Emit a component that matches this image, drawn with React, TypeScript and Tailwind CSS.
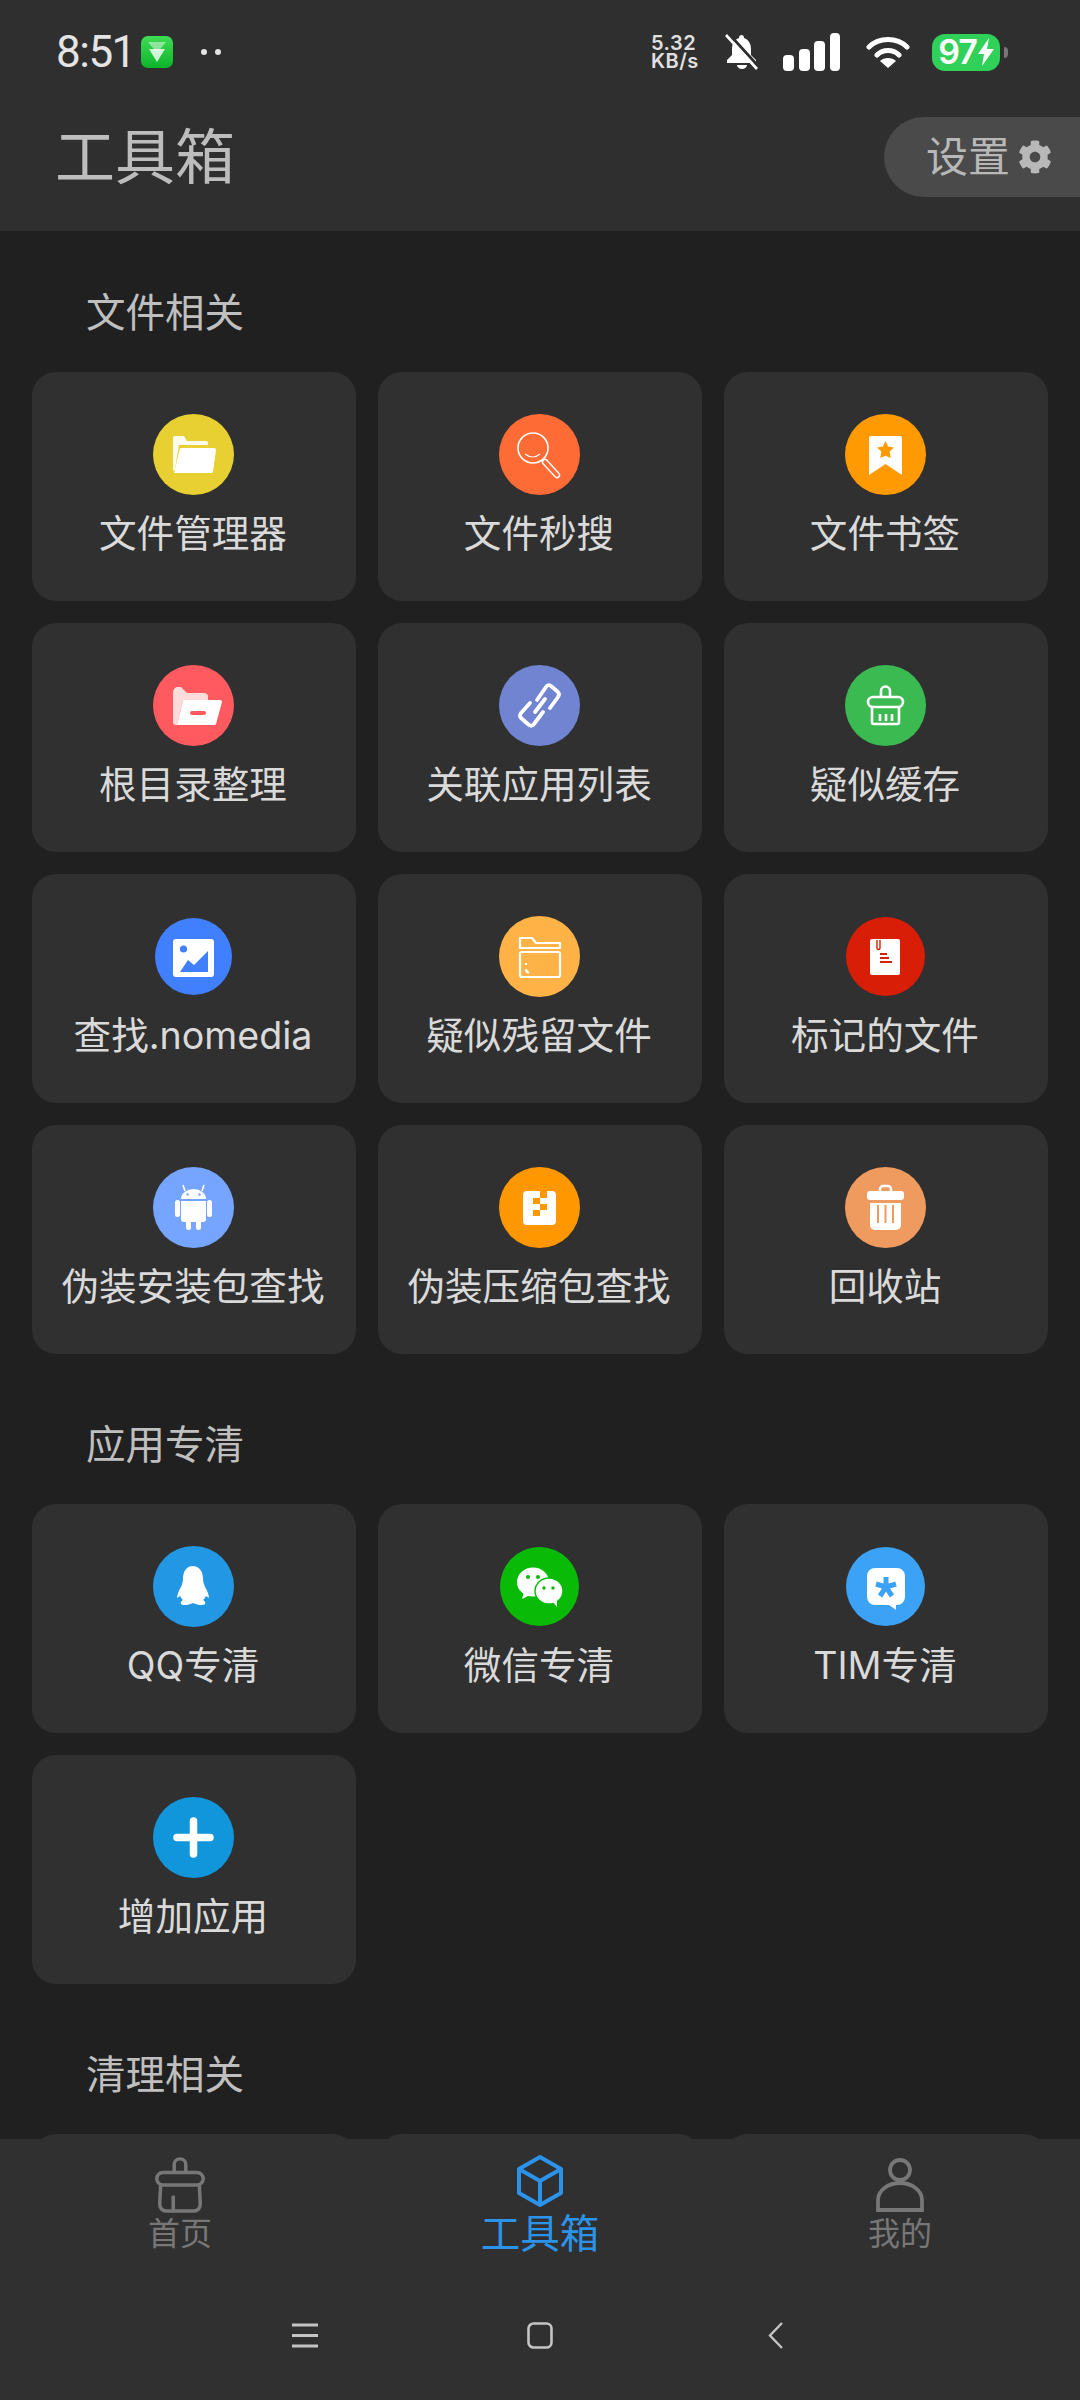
import type { ReactNode } from 'react'
import { FaCog } from 'react-icons/fa'

function Circle({ color, r = 40.5, children }: { color: string; r?: number; children: ReactNode }) {
  return <svg viewBox="0 0 81 81" className="h-[81px] w-[81px] shrink-0" aria-hidden="true">
    <circle cx="40.5" cy="40.5" r={r} fill={color} />
    {children}
  </svg>
}

const fileTools = [
  {
    label: '文件管理器',
    icon: <Circle color="#e8cf32">
      <path d="M20 24a2 2 0 0 1 2-2h9l3 5h19a2 2 0 0 1 2 2v2H26l-4 24-2 2z" fill="#fff" fillOpacity="0.9" />
      <path d="M27 34h34a2 2 0 0 1 2 2l-3 22a2 2 0 0 1-2 1H21z" fill="#fff" />
    </Circle>,
  },
  {
    label: '文件秒搜',
    icon: <Circle color="#ff6b35">
      <g fill="none" stroke="#fff">
        <circle cx="34" cy="34" r="15" strokeWidth="1.6" />
        <path d="M26 40q8 6 15 0" strokeWidth="1.2" />
      </g>
      <path d="M46 48l12 13" stroke="#fff" strokeWidth="6.5" strokeLinecap="round" />
      <path d="M46 48l12 13" stroke="#ff6b35" strokeWidth="3.6" strokeLinecap="round" />
    </Circle>,
  },
  {
    label: '文件书签',
    icon: <Circle color="#ff9a02">
      <path d="M24 24a2 2 0 0 1 2-2h29a2 2 0 0 1 2 2v37L40.5 50 24 61z" fill="#fff" />
      <path d="M40.5 27l2.6 5.6 5.9.8-4.3 4.2 1 6.4-5.2-2.2-5.2 2.2 1-6.4-4.3-4.2 5.9-.8z" fill="#ff9a02" />
    </Circle>,
  },
  {
    label: '根目录整理',
    icon: <Circle color="#ff5a5f">
      <path d="M20 27a5 5 0 0 1 5-5h3l6 6h17a4 4 0 0 1 4 4v4H30l-6 24h-1a3 3 0 0 1-3-3z" fill="#ffdcdc" />
      <path d="M30 36a2 2 0 0 1 2-1h35a2 2 0 0 1 2 2l-6 22a2 2 0 0 1-2 1H24z" fill="#fff" />
      <rect x="37" y="46" width="16" height="4" rx="2" fill="#ff5a5f" />
    </Circle>,
  },
  {
    label: '关联应用列表',
    icon: <Circle color="#7184d1">
      <g fill="none" stroke="#fff" strokeWidth="3.8" strokeLinecap="round" strokeLinejoin="round">
        <path d="M38 35l9-13q2-3 5-1l7 6q2 2 0 5l-8 11" />
        <path d="M31 38l-9 10q-2 3 0 5l8 7q3 2 5-1l9-12" />
        <path d="M36 47l10-13" />
      </g>
    </Circle>,
  },
  {
    label: '疑似缓存',
    icon: <Circle color="#3cba52">
      <g fill="none" stroke="#fff" strokeWidth="2.6" strokeLinejoin="round">
        <path d="M36 32v-6a4.5 4.5 0 0 1 9 0v6" />
        <rect x="23" y="32" width="35" height="10" rx="5" />
        <path d="M27 42v15a2 2 0 0 0 2 2h23a2 2 0 0 0 2-2V42" />
        <path d="M35 49v7M41 49v7M47 49v7" />
      </g>
    </Circle>,
  },
  {
    label: '查找.nomedia',
    icon: <Circle color="#4080ff" r={38.5}>
      <rect x="20" y="23" width="41" height="38" rx="3" fill="#fff" />
      <circle cx="30.5" cy="33" r="3.6" fill="#4080ff" />
      <path d="M27 56l8-12 6 5 14-14v21z" fill="#4080ff" />
    </Circle>,
  },
  {
    label: '疑似残留文件',
    icon: <Circle color="#ffb347">
      <g fill="none" stroke="#fff" strokeWidth="2.2" strokeLinejoin="round">
        <path d="M21 22h12l4 5h24v5H21z" />
        <rect x="21" y="36" width="40" height="25" rx="2" />
        <path d="M27 47v2M27 53q0 3 3 4" />
      </g>
    </Circle>,
  },
  {
    label: '标记的文件',
    icon: <Circle color="#d81e06" r={39.5}>
      <rect x="25" y="23" width="30" height="36" rx="2" fill="#fff" />
      <path d="M32 24v8a1.4 1.4 0 0 0 3 0v-8" fill="none" stroke="#d81e06" strokeWidth="1.4" />
      <path d="M35 38h7M35 42h9M35 46h12" stroke="#d81e06" strokeWidth="2" />
    </Circle>,
  },
  {
    label: '伪装安装包查找',
    icon: <Circle color="#75a5ff">
      <g fill="#fff">
        <path d="M28 32a12.5 10 0 0 1 25 0z" />
        <path d="M32 24l-2-6M49 24l2-6" stroke="#fff" strokeWidth="1.6" />
        <path d="M28 34h25v18a3 3 0 0 1-3 3H31a3 3 0 0 1-3-3z" />
        <rect x="22" y="33" width="5" height="17" rx="2.5" />
        <rect x="54" y="33" width="5" height="17" rx="2.5" />
        <rect x="33" y="52" width="5" height="11" rx="2.5" />
        <rect x="43" y="52" width="5" height="11" rx="2.5" />
      </g>
      <circle cx="34.5" cy="27.5" r="1.2" fill="#75a5ff" />
      <circle cx="46.5" cy="27.5" r="1.2" fill="#75a5ff" />
    </Circle>,
  },
  {
    label: '伪装压缩包查找',
    icon: <Circle color="#ff9800">
      <rect x="24" y="24" width="33" height="34" rx="4" fill="#fff" />
      <path d="M34 31h7v6h-7zM41 24h7v7h-7zM41 37h7v6h-7zM34 43h7v6h-7z" fill="#ff9800" />
    </Circle>,
  },
  {
    label: '回收站',
    icon: <Circle color="#ef9b5f">
      <path d="M35 24v-2a3 3 0 0 1 3-3h5a3 3 0 0 1 3 3v2" fill="none" stroke="#fff" strokeWidth="2.4" />
      <rect x="22" y="24" width="37" height="9" rx="3" fill="#fff" />
      <path d="M25 36h31v22a5 5 0 0 1-5 5H30a5 5 0 0 1-5-5z" fill="#fff" />
      <path d="M33 38v18M40.5 38v18M48 38v18" stroke="#ef9b5f" strokeWidth="2" />
    </Circle>,
  },
]

const appTools = [
  {
    label: 'QQ专清',
    icon: <Circle color="#2298e4">
      <path d="M40 20c-7 0-10 6-10 13 0 3-1 5-2 8-2 3-4 8-4 11l3-2c1 2 2 3 3 4-2 1-3 3-2 4 2 2 8 1 12-1 4 2 10 3 12 1 1-1 0-3-2-4 1-1 2-2 3-4l3 2c0-3-2-8-4-11-1-3-2-5-2-8 0-7-3-13-11-13z" fill="#fff" />
    </Circle>,
  },
  {
    label: '微信专清',
    icon: <Circle color="#09bb07" r={39.5}>
      <ellipse cx="34" cy="36" rx="16" ry="14.5" fill="#fff" />
      <path d="M25 46l-2 7 8-4z" fill="#fff" />
      <circle cx="29" cy="31" r="2" fill="#09bb07" />
      <circle cx="39" cy="31" r="2" fill="#09bb07" />
      <ellipse cx="50" cy="45" rx="14" ry="13" fill="#fff" stroke="#09bb07" strokeWidth="1.4" />
      <path d="M54 56l4 5v-7z" fill="#fff" />
      <circle cx="45" cy="42" r="1.7" fill="#09bb07" />
      <circle cx="54" cy="42" r="1.7" fill="#09bb07" />
    </Circle>,
  },
  {
    label: 'TIM专清',
    icon: <Circle color="#3ca2f5" r={39.5}>
      <path d="M30 22h22a8 8 0 0 1 8 8v21a8 8 0 0 1-8 8h-1v5l-7-5H30a8 8 0 0 1-8-8V30a8 8 0 0 1 8-8z" fill="#fff" />
      <path d="M41 31v10M41 41l-10-3M41 41l10-3M41 41l-6 9M41 41l6 9" stroke="#3ca2f5" strokeWidth="5" />
    </Circle>,
  },
  {
    label: '增加应用',
    icon: <Circle color="#1296db">
      <path d="M24 40.5h33M40.5 24v33" stroke="#fff" strokeWidth="7.5" strokeLinecap="round" />
    </Circle>,
  },
]

function ToolGrid({ title, items }: { title: string; items: { label?: string; icon?: ReactNode }[] }) {
  return <section className="mb-[64px]">
    <h2 className="mb-[32px] pl-[54px] text-[39.5px] leading-[54px] font-normal text-[#bfbfbf]">{title}</h2>
    <div className="grid grid-cols-3 gap-x-[22px] gap-y-[22px]">
      {items.map((item, index) => <div key={index} className="flex h-[229px] flex-col items-center rounded-[24px] bg-[#303030] pt-[42px] pr-[2px]">
        {item.icon}
        <span className="mt-[13px] text-[37.6px] leading-[52px] whitespace-nowrap text-[#dadada]">{item.label}</span>
      </div>)}
    </div>
  </section>
}

function StatusBar() {
  return <div className="flex h-[52px] items-center pr-[72px] pl-[56px]">
    <span className="font-['Roboto'] text-[44px] leading-none tracking-[-1.5px] text-[#e4e4e4]">8:51</span>
    <svg viewBox="0 0 32 32" className="ml-[6px] h-[32px] w-[32px]" aria-hidden="true">
      <defs>
        <linearGradient id="appGreen" x1="0" y1="0" x2="0" y2="1">
          <stop offset="0" stopColor="#3fdc55" />
          <stop offset="1" stopColor="#0db52a" />
        </linearGradient>
      </defs>
      <rect width="32" height="32" rx="7" fill="url(#appGreen)" />
      <path d="M7 6h18l-9 11z" fill="#fff" fillOpacity="0.45" />
      <path d="M8 13h16l-8 13z" fill="#fff" fillOpacity="0.8" />
    </svg>
    <span className="ml-[28px] h-[6px] w-[6px] rounded-full bg-[#e4e4e4]" />
    <span className="ml-[8px] h-[6px] w-[6px] rounded-full bg-[#e4e4e4]" />

    <div className="ml-auto w-[48px] font-['Inter'] text-[20px] leading-[18px] font-semibold tracking-[0.5px] whitespace-nowrap text-[#e0e0e0]">
      5.32<br />KB/s
    </div>
    <svg viewBox="0 0 33 36" className="ml-[26px] h-[36px] w-[33px]" aria-hidden="true">
      <path d="M17 1a3 3 0 0 0-3 3C9 6 7 10 7 15v6l-5 5v3h29v-3l-5-5v-6c0-5-2-9-7-11a3 3 0 0 0-2-3zM12 31a5 4 0 0 0 10 0z" fill="#fff" />
      <path d="M4 0l30 33" stroke="#2f2f2f" strokeWidth="3" />
      <path d="M1 1l31 34" stroke="#fff" strokeWidth="2.6" />
    </svg>
    <svg viewBox="0 0 57 39" className="ml-[25px] h-[39px] w-[57px]" aria-hidden="true">
      <rect x="0" y="22" width="11" height="16" rx="4" fill="#fff" />
      <rect x="16" y="16" width="11" height="22" rx="4" fill="#fff" />
      <rect x="31" y="8" width="11" height="30" rx="4" fill="#fff" />
      <rect x="47" y="0" width="10" height="38" rx="4" fill="#fff" />
    </svg>
    <svg viewBox="0 0 44 32" className="ml-[26px] h-[32px] w-[44px]" aria-hidden="true">
      <path d="M3 11C13 1 31 1 41 11M11 19c6-6 16-6 22 0" fill="none" stroke="#fff" strokeWidth="5" strokeLinecap="round" />
      <path d="M22 32l-8-7c4-4 12-4 16 0z" fill="#fff" />
    </svg>
    <div className="ml-[22px] flex h-[37px] w-[68px] items-center justify-center gap-[1px] rounded-[13px] bg-[#30d158] font-['Inter'] text-[34px] leading-none font-semibold text-white">
      <span className="tracking-[-1px]">97</span>
      <svg viewBox="0 0 16 28" className="h-[28px] w-[16px]" aria-hidden="true">
        <path d="M11 0L0 16h6L4 28l12-17h-7z" fill="#fff" />
      </svg>
    </div>
    <span className="ml-[4px] h-[11px] w-[4px] rounded-r-full bg-[#777]" />
  </div>
}

function BottomTabs() {
  return <div className="grid grid-cols-3 pt-[16px]">
    <div className="flex flex-col items-center">
      <div className="flex h-[58px] items-end">
        <svg viewBox="0 0 60 60" className="h-[58px] w-[58px]" fill="none" stroke="#777" strokeWidth="3.6" strokeLinejoin="round" aria-hidden="true">
          <path d="M24 18V10a6 6 0 0 1 12 0v8" />
          <rect x="6" y="18" width="48" height="13" rx="6.5" />
          <path d="M10 31L9 50q0 8 7 8h28q7 0 7-8l-1-19" />
          <path d="M23 42v16" />
        </svg>
      </div>
      <span className="pt-[1px] text-[32px] leading-[40px] text-[#777]">首页</span>
    </div>
    <div className="flex flex-col items-center">
      <div className="flex h-[58px] items-start">
        <svg viewBox="0 0 46 52" className="h-[52px] w-[46px]" fill="none" stroke="#2b94ea" strokeWidth="4" strokeLinejoin="round" aria-hidden="true">
          <path d="M23 2l21 12v24L23 50 2 38V14z" />
          <path d="M2 14l21 12 21-12M23 26v24" />
        </svg>
      </div>
      <span className="pt-[1px] text-[39.5px] leading-[40px] text-[#2b94ea]">工具箱</span>
    </div>
    <div className="flex flex-col items-center">
      <div className="flex h-[58px] items-end pb-[1px]">
        <svg viewBox="0 0 50 54" className="h-[54px] w-[50px]" fill="none" stroke="#777" strokeWidth="3.8" aria-hidden="true">
          <circle cx="25" cy="12" r="10" />
          <path d="M3 52V42a22 17 0 0 1 44 0v10z" />
        </svg>
      </div>
      <span className="pt-[1px] text-[32px] leading-[40px] text-[#777]">我的</span>
    </div>
  </div>
}

function NavKeys() {
  return <div className="mt-[68px] grid grid-cols-[235px_235px_235px] justify-center">
    <svg viewBox="0 0 26 27" className="h-[27px] w-[26px] justify-self-center" stroke="#c4c4c4" strokeWidth="3" aria-hidden="true">
      <path d="M0 3h26M0 13.5h26M0 24h26" />
    </svg>
    <svg viewBox="0 0 26 27" className="h-[27px] w-[26px] justify-self-center" fill="none" stroke="#c4c4c4" strokeWidth="2.6" aria-hidden="true">
      <rect x="1.5" y="1.5" width="23" height="24" rx="5" />
    </svg>
    <svg viewBox="0 0 15 27" className="h-[27px] w-[15px] justify-self-center" fill="none" stroke="#c4c4c4" strokeWidth="2.4" aria-hidden="true">
      <path d="M14 1L2 13.5 14 26" />
    </svg>
  </div>
}

export default function App() {
  return <div className="flex h-[2400px] w-[1080px] flex-col overflow-hidden bg-[#202020] font-['Inter','Noto_Sans_CJK_SC',sans-serif]">
    <header className="h-[231px] shrink-0 bg-[#2f2f2f] pt-[26px]">
      <StatusBar />
      <div className="mt-[39px] flex h-[80px] items-center justify-between pl-[55px]">
        <h1 className="text-[60px] leading-none font-normal text-[#bdbdbd]">工具箱</h1>
        <button className="flex h-[80px] w-[196px] items-center rounded-l-[40px] bg-[#4a4a4a] pl-[42px] text-[42px] leading-none text-[#b8b8b8]">
          设置
          <FaCog className="ml-[8px] h-[34px] w-[34px]" />
        </button>
      </div>
    </header>
    <main className="min-h-0 flex-1 overflow-hidden px-[32px] pt-[55px]">
      <ToolGrid title="文件相关" items={fileTools} />
      <ToolGrid title="应用专清" items={appTools} />
      <ToolGrid title="清理相关" items={[{}, {}, {}]} />
    </main>
    <nav className="h-[261px] shrink-0 bg-[#303030]">
      <BottomTabs />
      <NavKeys />
    </nav>
  </div>
}
